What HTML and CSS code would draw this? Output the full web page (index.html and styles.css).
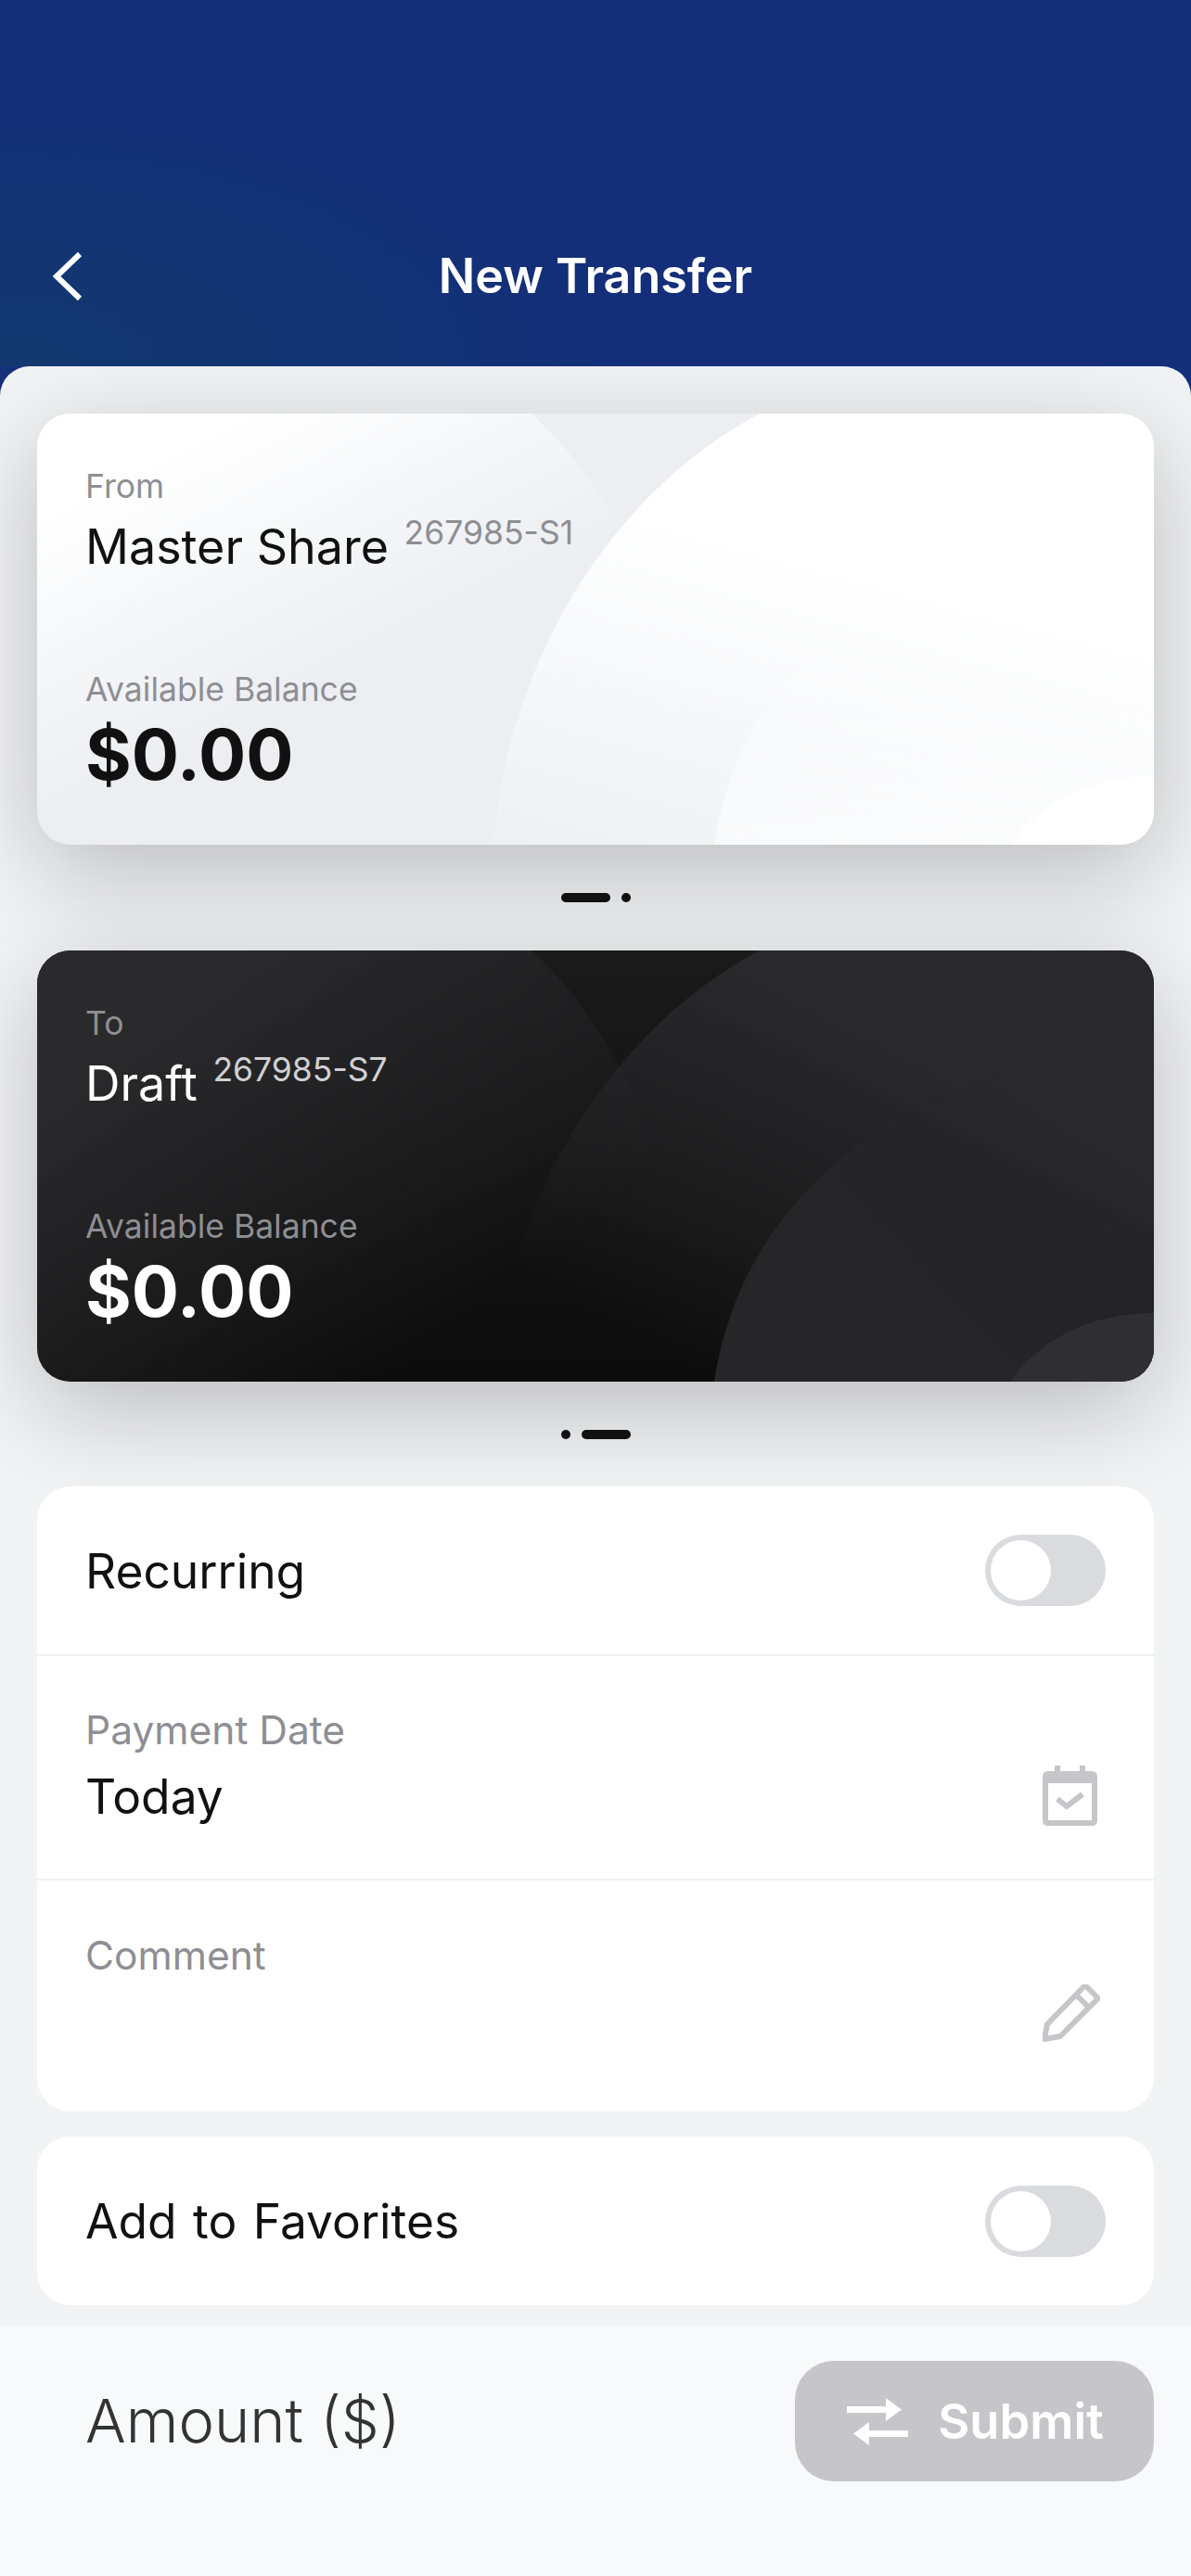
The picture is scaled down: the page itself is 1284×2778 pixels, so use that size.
FILE: index.html
```html
<!DOCTYPE html>
<html lang="en">
<head>
    <meta charset="UTF-8">
    <meta name="viewport" content="width=device-width, initial-scale=1.0">
    <title>New Transfer</title>
    <link rel="stylesheet" href="styles.css">
</head>
<body>
    <div class="page">
        <!-- Header -->
        <header class="top-bar">
            <svg class="back-icon" width="36" height="54" viewBox="0 0 36 54"><path d="M32 3 L7 27 L32 51" fill="none" stroke="#fff" stroke-width="6"/></svg>
            <h1>New Transfer</h1>
        </header>

        <main class="sheet">
            <!-- From account -->
            <section class="account-card light">
                <svg class="card-art" viewBox="0 0 1204 465" preserveAspectRatio="none">
                    <defs>
                        <linearGradient id="lightFade" gradientUnits="userSpaceOnUse" x1="150" y1="0" x2="300" y2="300">
                            <stop offset="0.1" stop-color="#fff"/>
                            <stop offset="1" stop-color="#fff" stop-opacity="0"/>
                        </linearGradient>
                        <linearGradient id="lightBig" gradientUnits="userSpaceOnUse" x1="800" y1="150" x2="700" y2="520">
                            <stop offset="0" stop-color="#fff"/>
                            <stop offset="1" stop-color="#fff" stop-opacity="0.12"/>
                        </linearGradient>
                        <linearGradient id="lightMid" gradientUnits="userSpaceOnUse" x1="0" y1="250" x2="0" y2="465">
                            <stop offset="0" stop-color="#fff" stop-opacity="0"/>
                            <stop offset="1" stop-color="#fff" stop-opacity="0.65"/>
                        </linearGradient>
                    </defs>
                    <path d="M0 0 H533 C 610 70 690 200 720 465 H0 Z" fill="url(#lightFade)"/>
                    <path d="M779 0 C 610 90 505 280 492 465 H1204 V0 Z" fill="url(#lightBig)"/>
                    <path d="M730 465 C 755 300 880 140 1204 95 V465 Z" fill="url(#lightMid)"/>
                    <path d="M1049 465 C 1085 415 1140 391 1204 391 V465 Z" fill="#fff"/>
                </svg>
                <div class="account-info">
                    <div class="card-label">From</div>
                    <div class="account-name">Master Share <sup class="account-no">267985-S1</sup></div>
                </div>
                <div class="account-info">
                    <div class="card-label">Available Balance</div>
                    <div class="balance">$0.00</div>
                </div>
            </section>
            <div class="pager">
                <span class="pager-bar"></span>
                <span class="pager-dot"></span>
            </div>

            <!-- To account -->
            <section class="account-card dark">
                <svg class="card-art" viewBox="0 0 1204 465" preserveAspectRatio="none">
                    <defs>
                        <linearGradient id="darkFade" gradientUnits="userSpaceOnUse" x1="100" y1="0" x2="430" y2="420">
                            <stop offset="0.1" stop-color="#2a2a2c"/>
                            <stop offset="1" stop-color="#2a2a2c" stop-opacity="0"/>
                        </linearGradient>
                        <linearGradient id="darkBig" gradientUnits="userSpaceOnUse" x1="850" y1="50" x2="650" y2="420">
                            <stop offset="0" stop-color="#29292b"/>
                            <stop offset="1" stop-color="#29292b" stop-opacity="0"/>
                        </linearGradient>
                        <linearGradient id="darkMid" gradientUnits="userSpaceOnUse" x1="1100" y1="100" x2="900" y2="300">
                            <stop offset="0" stop-color="#262628" stop-opacity="0"/>
                            <stop offset="1" stop-color="#262628"/>
                        </linearGradient>
                    </defs>
                    <path d="M0 0 H533 C 610 70 690 200 720 465 H0 Z" fill="url(#darkFade)"/>
                    <path d="M779 0 C 610 90 505 280 492 465 H1204 V0 Z" fill="url(#darkBig)"/>
                    <path d="M730 465 C 755 300 880 140 1204 95 V465 Z" fill="url(#darkMid)"/>
                    <path d="M1049 465 C 1085 415 1140 391 1204 391 V465 Z" fill="#2f2f31"/>
                </svg>
                <div class="account-info">
                    <div class="card-label">To</div>
                    <div class="account-name">Draft <sup class="account-no">267985-S7</sup></div>
                </div>
                <div class="account-info">
                    <div class="card-label">Available Balance</div>
                    <div class="balance">$0.00</div>
                </div>
            </section>
            <div class="pager pager-last">
                <span class="pager-dot"></span>
                <span class="pager-bar"></span>
            </div>

            <!-- Options -->
            <section class="panel">
                <div class="row row-toggle">
                    <span class="row-title">Recurring</span>
                    <span class="toggle"><span class="toggle-knob"></span></span>
                </div>
                <div class="row row-date">
                    <div>
                        <div class="row-label">Payment Date</div>
                        <div class="row-title row-value">Today</div>
                    </div>
                    <svg class="row-icon" width="59" height="65" viewBox="0 0 59 65">
                        <path fill="#c6c6ca" fill-rule="evenodd" d="M13 0 H19 V6 H40 V0 H46 V6 H53 Q59 6 59 12 V59 Q59 65 53 65 H6 Q0 65 0 59 V12 Q0 6 6 6 H13 Z M6 19 V59 H53 V19 Z"/>
                        <path fill="none" stroke="#c6c6ca" stroke-width="6" d="M16 36 L26 44 L43 31"/>
                    </svg>
                </div>
                <div class="row row-comment">
                    <div class="row-label">Comment</div>
                    <svg class="row-icon" width="62" height="62" viewBox="0 0 62 62">
                        <path fill="none" stroke="#c6c6ca" stroke-width="6" stroke-linejoin="round" d="M5 43 L2 59 L19 56 L58 17 Q60 15 58 13 L48 3 Q46 1 44 3 Z M36 11 L50 25"/>
                    </svg>
                </div>
            </section>

            <section class="panel panel-single">
                <div class="row row-toggle">
                    <span class="row-title">Add to Favorites</span>
                    <span class="toggle"><span class="toggle-knob"></span></span>
                </div>
            </section>
        </main>

        <!-- Amount + submit -->
        <footer class="amount-bar">
            <span class="amount-label">Amount ($)</span>
            <button class="submit-btn">
                <svg width="66" height="51" viewBox="0 0 66 51">
                    <path fill="#fff" d="M0 9 H42 V0 L59 12.5 L42 25 V16 H0 Z M66 35 H24 V26 L7 38.5 L24 51 V42 H66 Z"/>
                </svg>
                Submit
            </button>
        </footer>
    </div>
</body>
</html>
```

FILE: styles.css
```css
body {
    font-family: 'Inter', 'Liberation Sans', sans-serif;
    margin: 0;
    padding: 0;
}
.page {
    width: 1284px;
    height: 2778px;
    display: flex;
    flex-direction: column;
    overflow: hidden;
    background-color: #14307b;
}
.top-bar {
    height: 395px;
    flex-shrink: 0;
    box-sizing: border-box;
    padding: 0 0 67px 54px;
    display: flex;
    align-items: flex-end;
    background: radial-gradient(ellipse 700px 320px at 0 100%, #12386f 0%, #133572 40%, rgba(20, 46, 122, 0) 100%), #142e7a;
}
.top-bar h1 {
    margin: 0;
    flex: 1;
    padding-right: 90px;
    text-align: center;
    color: #fff;
    font-size: 52px;
    font-weight: 600;
    line-height: 60px;
}
.back-icon {
    flex-shrink: 0;
    margin-bottom: 3px;
}
.sheet {
    flex: 1;
    box-sizing: border-box;
    padding: 51px 40px 0;
    background-color: #f2f3f5;
    border-radius: 32px 32px 0 0;
    overflow: hidden;
}
.account-card {
    height: 465px;
    box-sizing: border-box;
    padding: 56px 52px 52px;
    display: flex;
    flex-direction: column;
    justify-content: space-between;
    position: relative;
    overflow: hidden;
    border-radius: 36px;
    box-shadow: 0 30px 110px rgba(0, 0, 0, 0.23);
}
.account-card.light {
    background-color: #eceef2;
    color: #111;
}
.account-card.dark {
    background: linear-gradient(to bottom, #1a1a1b, #0c0c0c);
    color: #fff;
}
.card-art {
    position: absolute;
    top: 0;
    left: 0;
    width: 100%;
    height: 100%;
}
.account-info {
    position: relative;
}
.card-label {
    font-size: 35.5px;
    line-height: 46px;
    color: #8e8e93;
}
.account-name {
    margin-top: 7px;
    font-size: 52px;
    line-height: 70px;
}
.account-no {
    font-size: 35.5px;
    line-height: 0;
    color: #8e8e93;
    vertical-align: 21px;
    margin-left: 2px;
}
.dark .account-no {
    color: #d0d0d4;
}
.balance {
    font-size: 76px;
    font-weight: 700;
    line-height: 92px;
}
.pager {
    height: 114px;
    display: flex;
    justify-content: center;
    align-items: center;
    gap: 12px;
    position: relative;
}
.pager-last {
    height: 113px;
}
.pager-bar {
    width: 53px;
    height: 10px;
    background-color: #111;
    border-radius: 5px;
}
.pager-dot {
    width: 10px;
    height: 10px;
    background-color: #111;
    border-radius: 50%;
}
.panel {
    background-color: #fff;
    border-radius: 36px;
    position: relative;
}
.panel-single {
    margin-top: 27px;
}
.row {
    box-sizing: border-box;
    padding: 0 52px;
    display: flex;
    justify-content: space-between;
    border-bottom: 2px solid #f0f1f3;
}
.row:last-child {
    border-bottom: none;
}
.row-toggle {
    height: 183px;
    align-items: center;
}
.panel-single .row-toggle {
    height: 182px;
}
.row-date {
    height: 242px;
    padding-top: 55px;
    padding-right: 61px;
}
.row-comment {
    height: 249px;
    padding-top: 56px;
    padding-right: 58px;
}
.row-title {
    font-size: 51.5px;
    word-spacing: 3px;
    line-height: 70px;
    color: #111;
}
.row-value {
    display: block;
    margin-top: 11px;
}
.row-label {
    font-size: 42.5px;
    line-height: 50px;
    color: #8e8e93;
}
.row-date .row-icon {
    margin-top: 63px;
}
.row-comment .row-icon {
    margin-top: 56px;
}
.toggle {
    width: 130px;
    height: 77px;
    box-sizing: border-box;
    padding: 6px;
    background-color: #dadbdf;
    border-radius: 39px;
}
.toggle-knob {
    display: block;
    width: 65px;
    height: 65px;
    background-color: #fff;
    border-radius: 50%;
}
.amount-bar {
    height: 270px;
    flex-shrink: 0;
    box-sizing: border-box;
    padding: 38px 40px 0 92px;
    display: flex;
    justify-content: space-between;
    align-items: flex-start;
    background-color: #f8f9fb;
}
.amount-label {
    font-size: 65px;
    font-weight: 300;
    line-height: 130px;
    color: #333;
}
.submit-btn {
    width: 387px;
    height: 130px;
    padding: 0 0 0 2px;
    display: flex;
    align-items: center;
    justify-content: center;
    gap: 32px;
    border: none;
    border-radius: 42px;
    background-color: #c6c6ca;
    color: #fff;
    font-family: inherit;
    font-size: 52.5px;
    font-weight: 600;
}
```
